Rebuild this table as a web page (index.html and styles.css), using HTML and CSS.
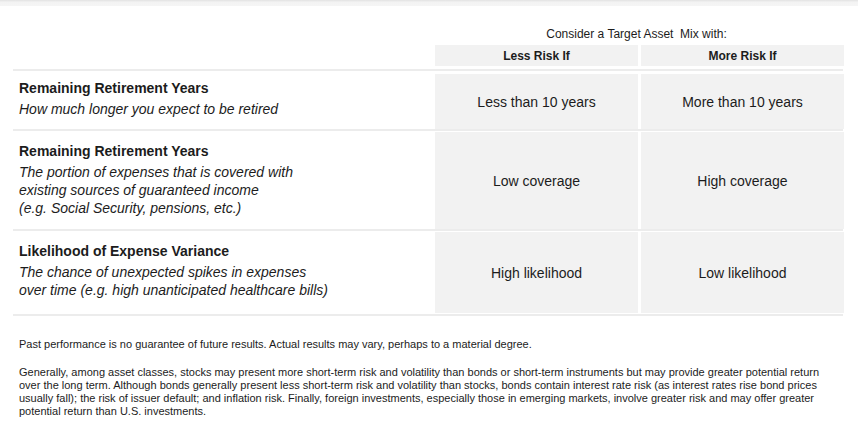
FILE: index.html
```html
<!DOCTYPE html>
<html>
<head>
<meta charset="utf-8">
<link rel="stylesheet" href="styles.css">
</head>
<body>
<div class="topband"></div>
<div class="wrap">
  <div class="caption-row">
    <div></div>
    <div class="caption">Consider a Target Asset&nbsp; Mix with:</div>
  </div>
  <div class="grid head">
    <div></div>
    <div class="cell hcell">Less Risk If</div>
    <div class="cell hcell">More Risk If</div>
  </div>
  <div class="sep sep-first"></div>
  <div class="grid row r1">
    <div class="label">
      <div class="title">Remaining Retirement Years</div>
      <div class="desc">How much longer you expect to be retired</div>
    </div>
    <div class="cell val">Less than 10 years</div>
    <div class="cell val">More than 10 years</div>
  </div>
  <div class="sep"></div>
  <div class="grid row r2">
    <div class="label">
      <div class="title">Remaining Retirement Years</div>
      <div class="desc">The portion of expenses that is covered with<br>existing sources of guaranteed income<br>(e.g. Social Security, pensions, etc.)</div>
    </div>
    <div class="cell val">Low coverage</div>
    <div class="cell val">High coverage</div>
  </div>
  <div class="sep"></div>
  <div class="grid row r3">
    <div class="label">
      <div class="title">Likelihood of Expense Variance</div>
      <div class="desc">The chance of unexpected spikes in expenses<br>over time (e.g. high unanticipated healthcare bills)</div>
    </div>
    <div class="cell val">High likelihood</div>
    <div class="cell val">Low likelihood</div>
  </div>
  <div class="sep sep-last"></div>
</div>
<div class="notes">
  <p>Past performance is no guarantee of future results. Actual results may vary, perhaps to a material degree.</p>
  <p>Generally, among asset classes, stocks may present more short-term risk and volatility than bonds or short-term instruments but may provide greater potential return over the long term. Although bonds generally present less short-term risk and volatility than stocks, bonds contain interest rate risk (as interest rates rise bond prices usually fall); the risk of issuer default; and inflation risk. Finally, foreign investments, especially those in emerging markets, involve greater risk and may offer greater potential return than U.S. investments.</p>
</div>
</body>
</html>
```

FILE: styles.css
```css
* { box-sizing: border-box; }
html, body { margin: 0; padding: 0; background: #fff; }
body {
  font-family: "Liberation Sans", Arial, Helvetica, sans-serif;
  color: #1c1c1c;
  width: 858px;
}
.topband {
  height: 6px;
  background: linear-gradient(#e2e2e2, #f3f3f3 35%, #f5f5f5);
}
.wrap {
  margin-left: 13px;
  width: 830px;
}
.grid {
  display: grid;
  grid-template-columns: 419px 203px 203px;
  column-gap: 3px;
}
.caption-row {
  display: grid;
  grid-template-columns: 419px 409px;
  padding-top: 21px;
}
.caption {
  text-align: center;
  font-size: 12px;
  line-height: 15px;
  height: 18px;
}
.cell {
  background: #f2f2f2;
  display: flex;
  align-items: center;
  justify-content: center;
  text-align: center;
}
.hcell {
  height: 21px;
  font-size: 12px;
  font-weight: bold;
}
.sep {
  height: 2px;
  background: #ececec;
  margin: 0 0 1px;
}
.sep-first { margin: 3px 0 3px; }
.sep-last { margin: 1px 0 1px; }
.val {
  font-size: 14px;
}
.label {
  padding: 9px 6px 12px;
}
.r1 .label { padding: 4px 6px 11px; }
.r3 .label { padding: 9px 6px 14px; }
.title {
  font-size: 14px;
  font-weight: bold;
  line-height: 20px;
  margin-bottom: 2px;
}
.desc {
  font-size: 14px;
  font-style: italic;
  line-height: 18px;
}
.notes {
  margin: 22px 0 0 19px;
  width: 820px;
  font-size: 11px;
  line-height: 13px;
}
.notes p { margin: 0 0 15px; }
```
